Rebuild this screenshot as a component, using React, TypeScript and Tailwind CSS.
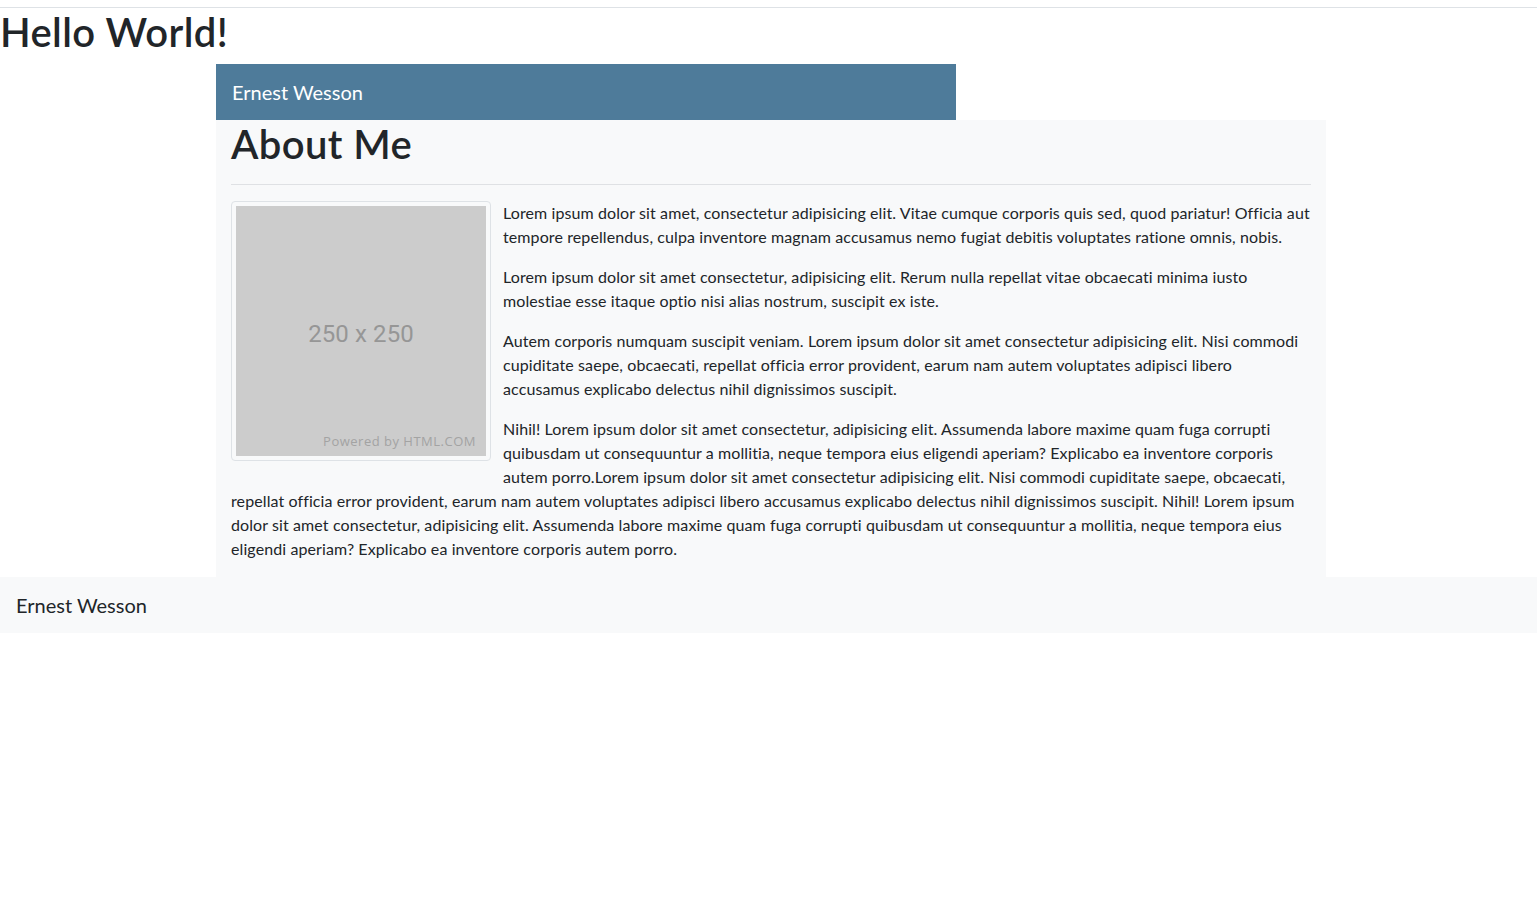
const body = { fontFamily: "Lato, 'Open Sans', sans-serif" };

const Placeholder = () => (
  <div className="float-left mr-3 mb-4 rounded border border-[#dee2e6] bg-[#f8f9fa] p-1">
    <div className="relative flex h-[250px] w-[250px] items-center justify-center bg-[#cccccc]">
      <span className="mt-[6px] text-[24px] leading-none text-[#969696]" style={{ fontFamily: "Roboto, sans-serif" }}>
        250 x 250
      </span>
      <span className="absolute bottom-[8px] right-[10px] text-[13px] leading-none tracking-[0.5px] text-[#a3a3a3]" style={{ fontFamily: "'Open Sans', sans-serif" }}>
        Powered by HTML.COM
      </span>
    </div>
  </div>
);

export default function App() {
  return (
    <div className="min-h-screen bg-white text-[#212529]" style={body}>
      <div className="mt-[7px] border-t border-[#dee2e6]" />
      <h1 className="mb-2 text-[40px] font-semibold leading-[48px] tracking-[0.4px]">Hello World!</h1>

      <div className="ml-[216px] w-[1110px]">
        <div className="flex h-14 w-[740px] items-center bg-[#4e7b9a] px-4 text-xl text-white">
          Ernest Wesson
        </div>

        <main className="flow-root bg-[#f8f9fa] px-[15px] pb-4">
          <h1 className="text-[40px] font-semibold leading-[48px] tracking-[0.4px]">About Me</h1>
          <hr className="mt-4 mb-4 border-t border-[#dfe1e4]" />
          <div className="text-base leading-6 tracking-[0.1px]">
            <Placeholder />
            <p className="mb-4">
              Lorem ipsum dolor sit amet, consectetur adipisicing elit. Vitae cumque corporis quis sed, quod pariatur! Officia aut tempore repellendus, culpa inventore magnam accusamus nemo fugiat debitis voluptates ratione omnis, nobis.
            </p>
            <p className="mb-4">
              Lorem ipsum dolor sit amet consectetur, adipisicing elit. Rerum nulla repellat vitae obcaecati minima iusto molestiae esse itaque optio nisi alias nostrum, suscipit ex iste.
            </p>
            <p className="mb-4">
              Autem corporis numquam suscipit veniam. Lorem ipsum dolor sit amet consectetur adipisicing elit. Nisi commodi cupiditate saepe, obcaecati, repellat officia error provident, earum nam autem voluptates adipisci libero accusamus explicabo delectus nihil dignissimos suscipit.
            </p>
            <p>
              Nihil! Lorem ipsum dolor sit amet consectetur, adipisicing elit. Assumenda labore maxime quam fuga corrupti quibusdam ut consequuntur a mollitia, neque tempora eius eligendi aperiam? Explicabo ea inventore corporis autem porro.Lorem ipsum dolor sit amet consectetur adipisicing elit. Nisi commodi cupiditate saepe, obcaecati, repellat officia error provident, earum nam autem voluptates adipisci libero accusamus explicabo delectus nihil dignissimos suscipit. Nihil! Lorem ipsum dolor sit amet consectetur, adipisicing elit. Assumenda labore maxime quam fuga corrupti quibusdam ut consequuntur a mollitia, neque tempora eius eligendi aperiam? Explicabo ea inventore corporis autem porro.
            </p>
          </div>
        </main>
      </div>

      <footer className="flex h-14 items-center bg-[#f8f9fa] px-4 text-xl">Ernest Wesson</footer>
    </div>
  );
}
